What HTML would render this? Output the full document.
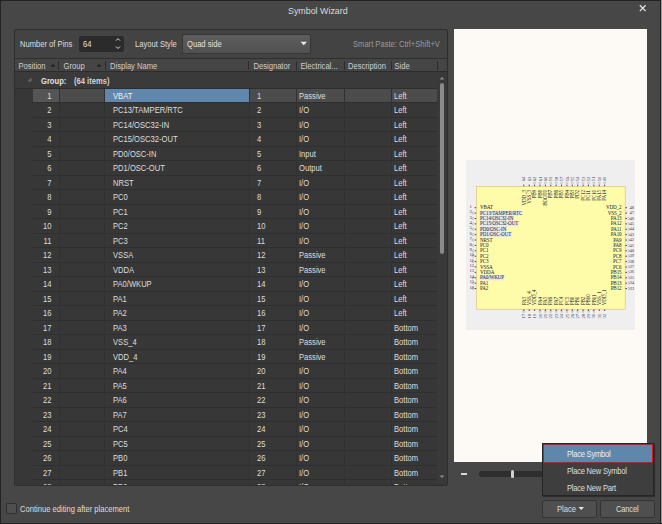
<!DOCTYPE html><html><head><meta charset="utf-8"><style>
*{margin:0;padding:0;box-sizing:border-box}
html,body{width:662px;height:524px;overflow:hidden;background:#474747}
body{position:relative;font-family:"Liberation Sans",sans-serif;font-size:7.6px;color:#dedede}
.a{position:absolute}
.t{position:absolute;white-space:nowrap;line-height:1;transform:translateY(1px) scaleY(1.08);transform-origin:0 60%}
#title{left:288px;top:5.8px;font-size:8.9px;color:#dadada}
#panel{left:14px;top:29px;width:434px;height:457px;background:#434343;border:1px solid #2e2e2e;border-radius:2px}
#spin{left:79px;top:36px;width:45px;height:16px;background:#2b2b2b;border-radius:2px}
#combo{left:182px;top:33.5px;width:129px;height:20px;background:linear-gradient(#5d5d5d,#515151);border:1px solid #363636;border-radius:2px}
#hdr{left:15px;top:58px;width:432px;height:14px;background:#454545;border-top:1px solid #303030;border-bottom:1px solid #2c2c2c}
#hdr i{position:absolute;font-style:normal;top:3px;white-space:nowrap;color:#cdcdcd;line-height:1;transform:translateY(1px) scaleY(1.08);transform-origin:0 60%}
#hdr b{position:absolute;top:2px;width:1px;height:9px;background:#2c2c2c}
#grid{left:15px;top:72px;width:432px;height:413px;background:#373737;overflow:hidden;border-bottom-left-radius:2px;border-bottom-right-radius:2px}
#indent{display:none}
#grouprow{position:absolute;left:0;top:0;width:422px;height:17px;background:#3a3a3a;border-bottom:1px solid #2e2e2e}
#scroll{position:absolute;left:422px;top:0;width:10px;height:412px;background:#393939}
.vl{position:absolute;top:17px;width:1px;height:400px;background:#313131}
.row{position:absolute;left:18px;width:404px;height:14.5px;border-bottom:1px solid #2f2f2f}
.row i{position:absolute;top:3px;font-style:normal;white-space:nowrap;line-height:1;transform:translateY(1px) scaleY(1.08);transform-origin:0 60%}
.c1{left:0;width:18.5px;text-align:right}
.c3{left:80px}
.c4{left:224px}
.c5{left:266px}
.c7{left:361px}
.sel{background:#4c4c4c}
.s1{position:absolute;left:0;top:0;width:26px;height:13.5px;background:#555}
.s3{position:absolute;left:72px;top:0;width:144px;height:13.5px;background:#6087ac}
.sel .c3{color:#f2f2f2}
#preview{left:454px;top:29px;width:193px;height:433px;background:#fdfaf6;overflow:hidden}
.btn{position:absolute;top:500px;height:17.5px;background:#4f4f4f;border:1px solid #343434;border-radius:2px}
#menu{left:542px;top:443px;width:112px;height:53px;background:#3e3e3e;border:1px solid #262626;box-shadow:1px 1px 1px rgba(0,0,0,.35)}
svg text{font-family:"Liberation Serif",serif;font-size:5.1px;letter-spacing:-0.12px;fill:#2a2a3a;stroke:#2a2a3a;stroke-width:0.03px}
svg text.pn{font-size:4.6px;fill:#3a3a4e;stroke:none}
</style></head><body>
<div class="a" style="left:0;top:0;width:662px;height:1px;background:#232323"></div>
<div class="a" style="left:0;top:0;width:1px;height:524px;background:#232323"></div>
<div class="a" style="left:660px;top:0;width:1px;height:524px;background:#232323"></div>
<div class="a" style="left:661px;top:0;width:1px;height:524px;background:#9a9a9a"></div>
<div class="a" style="left:0;top:523px;width:662px;height:1px;background:#232323"></div>
<div class="t" id="title">Symbol Wizard</div>
<svg class="a" style="left:636px;top:2px" width="14" height="14" viewBox="0 0 14 14"><path d="M3.8 3.3L9.6 9.1M9.6 3.3L3.8 9.1" stroke="#e4e4e4" stroke-width="1.25"/></svg>
<div class="a" id="panel"></div>
<div class="t" style="left:20px;top:40px">Number of Pins</div>
<div class="a" id="spin"></div>
<div class="t" style="left:83px;top:40px;color:#e2e2e2">64</div>
<svg class="a" style="left:115px;top:36px" width="6" height="15" viewBox="0 0 6 15"><path d="M1 4.6L3 2.6L5 4.6M1 10.5L3 12.5L5 10.5" stroke="#dddddd" stroke-width="1" fill="none"/></svg>
<div class="t" style="left:135px;top:40px">Layout Style</div>
<div class="a" id="combo"></div>
<div class="t" style="left:187px;top:40px;color:#e2e2e2">Quad side</div>
<svg class="a" style="left:300.2px;top:41.3px" width="8" height="5" viewBox="0 0 8 5"><path d="M0.5 0.8L7 0.8L3.75 4.2Z" fill="#ececec"/></svg>
<div class="t" style="left:353px;top:40px;color:#9a9a9a">Smart Paste: Ctrl+Shift+V</div>
<div class="a" id="hdr">
  <i style="left:3.5px">Position</i><svg class="a" style="left:34.5px;top:4px" width="6" height="4"><path d="M0.5 3.5L3 1L5.5 3.5Z" fill="#1c1c1c"/></svg><b style="left:43px"></b>
  <i style="left:48.5px">Group</i><svg class="a" style="left:81px;top:4px" width="6" height="4"><path d="M0.5 3.5L3 1L5.5 3.5Z" fill="#1c1c1c"/></svg><b style="left:89.5px"></b>
  <i style="left:95px">Display Name</i><b style="left:233px"></b>
  <i style="left:238.5px">Designator</i><b style="left:280.5px"></b>
  <i style="left:285.5px">Electrical...</i><b style="left:328.5px"></b>
  <i style="left:333px">Description</i><b style="left:375.5px"></b>
  <i style="left:379.5px">Side</i><b style="left:421.5px"></b>
</div>
<div class="a" id="grid">
  <div id="indent"></div>
  <div id="grouprow"><svg class="a" style="left:12px;top:5px" width="5" height="5"><path d="M4.5 0.5L4.5 4.5L0.5 4.5Z" fill="#6a6a6a"/></svg>
    <span class="t" style="left:26px;top:4.5px;font-weight:bold;color:#e2e2e2">Group:</span><span class="t" style="left:59px;top:4.5px;font-weight:bold;color:#d2d2d2">(64 items)</span></div>
<div class="row sel" style="top:16.6px"><u class="s1"></u><u class="s3"></u><i class="c1">1</i><i class="c3">VBAT</i><i class="c4">1</i><i class="c5">Passive</i><i class="c7">Left</i></div>
<div class="row" style="top:31.1px"><i class="c1">2</i><i class="c3">PC13/TAMPER/RTC</i><i class="c4">2</i><i class="c5">I/O</i><i class="c7">Left</i></div>
<div class="row" style="top:45.6px"><i class="c1">3</i><i class="c3">PC14/OSC32-IN</i><i class="c4">3</i><i class="c5">I/O</i><i class="c7">Left</i></div>
<div class="row" style="top:60.1px"><i class="c1">4</i><i class="c3">PC15/OSC32-OUT</i><i class="c4">4</i><i class="c5">I/O</i><i class="c7">Left</i></div>
<div class="row" style="top:74.6px"><i class="c1">5</i><i class="c3">PD0/OSC-IN</i><i class="c4">5</i><i class="c5">Input</i><i class="c7">Left</i></div>
<div class="row" style="top:89.1px"><i class="c1">6</i><i class="c3">PD1/OSC-OUT</i><i class="c4">6</i><i class="c5">Output</i><i class="c7">Left</i></div>
<div class="row" style="top:103.6px"><i class="c1">7</i><i class="c3">NRST</i><i class="c4">7</i><i class="c5">I/O</i><i class="c7">Left</i></div>
<div class="row" style="top:118.1px"><i class="c1">8</i><i class="c3">PC0</i><i class="c4">8</i><i class="c5">I/O</i><i class="c7">Left</i></div>
<div class="row" style="top:132.6px"><i class="c1">9</i><i class="c3">PC1</i><i class="c4">9</i><i class="c5">I/O</i><i class="c7">Left</i></div>
<div class="row" style="top:147.1px"><i class="c1">10</i><i class="c3">PC2</i><i class="c4">10</i><i class="c5">I/O</i><i class="c7">Left</i></div>
<div class="row" style="top:161.6px"><i class="c1">11</i><i class="c3">PC3</i><i class="c4">11</i><i class="c5">I/O</i><i class="c7">Left</i></div>
<div class="row" style="top:176.1px"><i class="c1">12</i><i class="c3">VSSA</i><i class="c4">12</i><i class="c5">Passive</i><i class="c7">Left</i></div>
<div class="row" style="top:190.6px"><i class="c1">13</i><i class="c3">VDDA</i><i class="c4">13</i><i class="c5">Passive</i><i class="c7">Left</i></div>
<div class="row" style="top:205.1px"><i class="c1">14</i><i class="c3">PA0/WKUP</i><i class="c4">14</i><i class="c5">I/O</i><i class="c7">Left</i></div>
<div class="row" style="top:219.6px"><i class="c1">15</i><i class="c3">PA1</i><i class="c4">15</i><i class="c5">I/O</i><i class="c7">Left</i></div>
<div class="row" style="top:234.1px"><i class="c1">16</i><i class="c3">PA2</i><i class="c4">16</i><i class="c5">I/O</i><i class="c7">Left</i></div>
<div class="row" style="top:248.6px"><i class="c1">17</i><i class="c3">PA3</i><i class="c4">17</i><i class="c5">I/O</i><i class="c7">Bottom</i></div>
<div class="row" style="top:263.1px"><i class="c1">18</i><i class="c3">VSS_4</i><i class="c4">18</i><i class="c5">Passive</i><i class="c7">Bottom</i></div>
<div class="row" style="top:277.6px"><i class="c1">19</i><i class="c3">VDD_4</i><i class="c4">19</i><i class="c5">Passive</i><i class="c7">Bottom</i></div>
<div class="row" style="top:292.1px"><i class="c1">20</i><i class="c3">PA4</i><i class="c4">20</i><i class="c5">I/O</i><i class="c7">Bottom</i></div>
<div class="row" style="top:306.6px"><i class="c1">21</i><i class="c3">PA5</i><i class="c4">21</i><i class="c5">I/O</i><i class="c7">Bottom</i></div>
<div class="row" style="top:321.1px"><i class="c1">22</i><i class="c3">PA6</i><i class="c4">22</i><i class="c5">I/O</i><i class="c7">Bottom</i></div>
<div class="row" style="top:335.6px"><i class="c1">23</i><i class="c3">PA7</i><i class="c4">23</i><i class="c5">I/O</i><i class="c7">Bottom</i></div>
<div class="row" style="top:350.1px"><i class="c1">24</i><i class="c3">PC4</i><i class="c4">24</i><i class="c5">I/O</i><i class="c7">Bottom</i></div>
<div class="row" style="top:364.6px"><i class="c1">25</i><i class="c3">PC5</i><i class="c4">25</i><i class="c5">I/O</i><i class="c7">Bottom</i></div>
<div class="row" style="top:379.1px"><i class="c1">26</i><i class="c3">PB0</i><i class="c4">26</i><i class="c5">I/O</i><i class="c7">Bottom</i></div>
<div class="row" style="top:393.6px"><i class="c1">27</i><i class="c3">PB1</i><i class="c4">27</i><i class="c5">I/O</i><i class="c7">Bottom</i></div>
<div class="row" style="top:408.1px"><i class="c1">28</i><i class="c3">PB2</i><i class="c4">28</i><i class="c5">I/O</i><i class="c7">Bottom</i></div>
  <b class="vl" style="left:44px"></b><b class="vl" style="left:89px"></b><b class="vl" style="left:234px"></b><b class="vl" style="left:281px"></b><b class="vl" style="left:329px"></b><b class="vl" style="left:376px"></b><b class="vl" style="left:422px"></b>
  <div id="scroll">
    <svg class="a" style="left:2px;top:4px" width="6" height="4"><path d="M0.5 3.5L3 1L5.5 3.5Z" fill="#8a8a8a"/></svg>
    <div class="a" style="left:3px;top:11px;width:4px;height:171px;background:#8a8a8a;border-radius:2px"></div>
    <svg class="a" style="left:2px;top:403px" width="6" height="4"><path d="M0.5 0.5L3 3L5.5 0.5Z" fill="#8a8a8a"/></svg>
  </div>
</div>
<div class="a" id="preview"><svg class="a" style="left:-454px;top:-29px" width="662" height="524"><rect x="466" y="160" width="169" height="170" fill="#efeff0"/>
<rect x="476.4" y="186.4" width="148.8" height="122.8" fill="#fffca9" stroke="#e6c080" stroke-width="0.7"/>
<text x="480" y="209.30">VBAT</text>
<path d="M474.6 207.70H476.2" stroke="#222" stroke-width="0.8"/>
<text class="pn" x="469.5" y="207.80">1</text>
<rect x="479.3" y="210.79" width="43.1" height="4.9" fill="#e4e6ee"/>
<text x="480" y="214.69">PC13/TAMPER/RTC</text>
<path d="M474.6 213.09H476.2" stroke="#222" stroke-width="0.8"/>
<path d="M474 211.69L471.6 213.09L474 214.49" stroke="#8a8a9a" stroke-width="0.5" fill="none"/>
<text class="pn" x="469.5" y="213.19">2</text>
<rect x="479.3" y="216.18" width="34.4" height="4.9" fill="#e4e6ee"/>
<text x="480" y="220.08">PC14/OSC32-IN</text>
<path d="M474.6 218.48H476.2" stroke="#222" stroke-width="0.8"/>
<path d="M474 217.08L471.6 218.48L474 219.88" stroke="#8a8a9a" stroke-width="0.5" fill="none"/>
<text class="pn" x="469.5" y="218.58">3</text>
<rect x="479.3" y="221.57" width="39.2" height="4.9" fill="#e4e6ee"/>
<text x="480" y="225.47">PC15/OSC32-OUT</text>
<path d="M474.6 223.87H476.2" stroke="#222" stroke-width="0.8"/>
<path d="M474 222.47L471.6 223.87L474 225.27" stroke="#8a8a9a" stroke-width="0.5" fill="none"/>
<text class="pn" x="469.5" y="223.97">4</text>
<rect x="479.3" y="226.96" width="27.3" height="4.9" fill="#e4e6ee"/>
<text x="480" y="230.86">PD0/OSC-IN</text>
<path d="M474.6 229.26H476.2" stroke="#222" stroke-width="0.8"/>
<path d="M474 227.86L471.6 229.26L474 230.66" stroke="#8a8a9a" stroke-width="0.5" fill="none"/>
<text class="pn" x="469.5" y="229.36">5</text>
<rect x="479.3" y="232.35" width="32.2" height="4.9" fill="#e4e6ee"/>
<text x="480" y="236.25">PD1/OSC-OUT</text>
<path d="M474.6 234.65H476.2" stroke="#222" stroke-width="0.8"/>
<path d="M474 233.25L471.6 234.65L474 236.05" stroke="#8a8a9a" stroke-width="0.5" fill="none"/>
<text class="pn" x="469.5" y="234.75">6</text>
<text x="480" y="241.64">NRST</text>
<path d="M474.6 240.04H476.2" stroke="#222" stroke-width="0.8"/>
<path d="M474 238.64L471.6 240.04L474 241.44" stroke="#8a8a9a" stroke-width="0.5" fill="none"/>
<text class="pn" x="469.5" y="240.14">7</text>
<text x="480" y="247.03">PC0</text>
<path d="M474.6 245.43H476.2" stroke="#222" stroke-width="0.8"/>
<path d="M474 244.03L471.6 245.43L474 246.83" stroke="#8a8a9a" stroke-width="0.5" fill="none"/>
<text class="pn" x="469.5" y="245.53">8</text>
<text x="480" y="252.42">PC1</text>
<path d="M474.6 250.82H476.2" stroke="#222" stroke-width="0.8"/>
<path d="M474 249.42L471.6 250.82L474 252.22" stroke="#8a8a9a" stroke-width="0.5" fill="none"/>
<text class="pn" x="469.5" y="250.92">9</text>
<text x="480" y="257.81">PC2</text>
<path d="M474.6 256.21H476.2" stroke="#222" stroke-width="0.8"/>
<path d="M474 254.81L471.6 256.21L474 257.61" stroke="#8a8a9a" stroke-width="0.5" fill="none"/>
<text class="pn" x="469.5" y="256.31">10</text>
<text x="480" y="263.20">PC3</text>
<path d="M474.6 261.60H476.2" stroke="#222" stroke-width="0.8"/>
<path d="M474 260.20L471.6 261.60L474 263.00" stroke="#8a8a9a" stroke-width="0.5" fill="none"/>
<text class="pn" x="469.5" y="261.70">11</text>
<text x="480" y="268.59">VSSA</text>
<path d="M474.6 266.99H476.2" stroke="#222" stroke-width="0.8"/>
<text class="pn" x="469.5" y="267.09">12</text>
<text x="480" y="273.98">VDDA</text>
<path d="M474.6 272.38H476.2" stroke="#222" stroke-width="0.8"/>
<text class="pn" x="469.5" y="272.48">13</text>
<rect x="479.3" y="275.47" width="25.0" height="4.9" fill="#e4e6ee"/>
<text x="480" y="279.37">PA0/WKUP</text>
<path d="M474.6 277.77H476.2" stroke="#222" stroke-width="0.8"/>
<path d="M474 276.37L471.6 277.77L474 279.17" stroke="#8a8a9a" stroke-width="0.5" fill="none"/>
<text class="pn" x="469.5" y="277.87">14</text>
<text x="480" y="284.76">PA1</text>
<path d="M474.6 283.16H476.2" stroke="#222" stroke-width="0.8"/>
<path d="M474 281.76L471.6 283.16L474 284.56" stroke="#8a8a9a" stroke-width="0.5" fill="none"/>
<text class="pn" x="469.5" y="283.26">15</text>
<text x="480" y="290.15">PA2</text>
<path d="M474.6 288.55H476.2" stroke="#222" stroke-width="0.8"/>
<path d="M474 287.15L471.6 288.55L474 289.95" stroke="#8a8a9a" stroke-width="0.5" fill="none"/>
<text class="pn" x="469.5" y="288.65">16</text>
<text x="621.5" y="209.30" text-anchor="end">VDD_2</text>
<path d="M625.4 207.70H627" stroke="#222" stroke-width="0.8"/>
<text class="pn" x="629.5" y="208.80">48</text>
<text x="621.5" y="214.69" text-anchor="end">VSS_2</text>
<path d="M625.4 213.09H627" stroke="#222" stroke-width="0.8"/>
<text class="pn" x="629.5" y="214.19">47</text>
<text x="621.5" y="220.08" text-anchor="end">PA13</text>
<path d="M625.4 218.48H627" stroke="#222" stroke-width="0.8"/>
<path d="M627.6 217.08L630 218.48L627.6 219.88" stroke="#8a8a9a" stroke-width="0.5" fill="none"/>
<text class="pn" x="629.5" y="219.58">46</text>
<text x="621.5" y="225.47" text-anchor="end">PA12</text>
<path d="M625.4 223.87H627" stroke="#222" stroke-width="0.8"/>
<path d="M627.6 222.47L630 223.87L627.6 225.27" stroke="#8a8a9a" stroke-width="0.5" fill="none"/>
<text class="pn" x="629.5" y="224.97">45</text>
<text x="621.5" y="230.86" text-anchor="end">PA11</text>
<path d="M625.4 229.26H627" stroke="#222" stroke-width="0.8"/>
<path d="M627.6 227.86L630 229.26L627.6 230.66" stroke="#8a8a9a" stroke-width="0.5" fill="none"/>
<text class="pn" x="629.5" y="230.36">44</text>
<text x="621.5" y="236.25" text-anchor="end">PA10</text>
<path d="M625.4 234.65H627" stroke="#222" stroke-width="0.8"/>
<path d="M627.6 233.25L630 234.65L627.6 236.05" stroke="#8a8a9a" stroke-width="0.5" fill="none"/>
<text class="pn" x="629.5" y="235.75">43</text>
<text x="621.5" y="241.64" text-anchor="end">PA9</text>
<path d="M625.4 240.04H627" stroke="#222" stroke-width="0.8"/>
<path d="M627.6 238.64L630 240.04L627.6 241.44" stroke="#8a8a9a" stroke-width="0.5" fill="none"/>
<text class="pn" x="629.5" y="241.14">42</text>
<text x="621.5" y="247.03" text-anchor="end">PA8</text>
<path d="M625.4 245.43H627" stroke="#222" stroke-width="0.8"/>
<path d="M627.6 244.03L630 245.43L627.6 246.83" stroke="#8a8a9a" stroke-width="0.5" fill="none"/>
<text class="pn" x="629.5" y="246.53">41</text>
<text x="621.5" y="252.42" text-anchor="end">PC9</text>
<path d="M625.4 250.82H627" stroke="#222" stroke-width="0.8"/>
<path d="M627.6 249.42L630 250.82L627.6 252.22" stroke="#8a8a9a" stroke-width="0.5" fill="none"/>
<text class="pn" x="629.5" y="251.92">40</text>
<text x="621.5" y="257.81" text-anchor="end">PC8</text>
<path d="M625.4 256.21H627" stroke="#222" stroke-width="0.8"/>
<path d="M627.6 254.81L630 256.21L627.6 257.61" stroke="#8a8a9a" stroke-width="0.5" fill="none"/>
<text class="pn" x="629.5" y="257.31">39</text>
<text x="621.5" y="263.20" text-anchor="end">PC7</text>
<path d="M625.4 261.60H627" stroke="#222" stroke-width="0.8"/>
<path d="M627.6 260.20L630 261.60L627.6 263.00" stroke="#8a8a9a" stroke-width="0.5" fill="none"/>
<text class="pn" x="629.5" y="262.70">38</text>
<text x="621.5" y="268.59" text-anchor="end">PC6</text>
<path d="M625.4 266.99H627" stroke="#222" stroke-width="0.8"/>
<path d="M627.6 265.59L630 266.99L627.6 268.39" stroke="#8a8a9a" stroke-width="0.5" fill="none"/>
<text class="pn" x="629.5" y="268.09">37</text>
<text x="621.5" y="273.98" text-anchor="end">PB15</text>
<path d="M625.4 272.38H627" stroke="#222" stroke-width="0.8"/>
<path d="M627.6 270.98L630 272.38L627.6 273.78" stroke="#8a8a9a" stroke-width="0.5" fill="none"/>
<text class="pn" x="629.5" y="273.48">36</text>
<text x="621.5" y="279.37" text-anchor="end">PB14</text>
<path d="M625.4 277.77H627" stroke="#222" stroke-width="0.8"/>
<path d="M627.6 276.37L630 277.77L627.6 279.17" stroke="#8a8a9a" stroke-width="0.5" fill="none"/>
<text class="pn" x="629.5" y="278.87">35</text>
<text x="621.5" y="284.76" text-anchor="end">PB13</text>
<path d="M625.4 283.16H627" stroke="#222" stroke-width="0.8"/>
<path d="M627.6 281.76L630 283.16L627.6 284.56" stroke="#8a8a9a" stroke-width="0.5" fill="none"/>
<text class="pn" x="629.5" y="284.26">34</text>
<text x="621.5" y="290.15" text-anchor="end">PB12</text>
<path d="M625.4 288.55H627" stroke="#222" stroke-width="0.8"/>
<path d="M627.6 287.15L630 288.55L627.6 289.95" stroke="#8a8a9a" stroke-width="0.5" fill="none"/>
<text class="pn" x="629.5" y="289.65">33</text>
<text transform="translate(525.50 305.2) rotate(-90)">PA3</text>
<path d="M523.80 309.4V311" stroke="#222" stroke-width="0.8"/>
<path d="M522.50 310.6L523.80 311.8L525.10 310.6M522.50 311.6L523.80 312.8L525.10 311.6" stroke="#9a9aa8" stroke-width="0.45" fill="none"/>
<text class="pn" transform="translate(525.40 318.5) rotate(-90)">17</text>
<text transform="translate(530.89 305.2) rotate(-90)">VSS_4</text>
<path d="M529.19 309.4V311" stroke="#222" stroke-width="0.8"/>
<text class="pn" transform="translate(530.79 318.5) rotate(-90)">18</text>
<text transform="translate(536.28 305.2) rotate(-90)">VDD_4</text>
<path d="M534.58 309.4V311" stroke="#222" stroke-width="0.8"/>
<text class="pn" transform="translate(536.18 318.5) rotate(-90)">19</text>
<text transform="translate(541.67 305.2) rotate(-90)">PA4</text>
<path d="M539.97 309.4V311" stroke="#222" stroke-width="0.8"/>
<path d="M538.67 310.6L539.97 311.8L541.27 310.6M538.67 311.6L539.97 312.8L541.27 311.6" stroke="#9a9aa8" stroke-width="0.45" fill="none"/>
<text class="pn" transform="translate(541.57 318.5) rotate(-90)">20</text>
<text transform="translate(547.06 305.2) rotate(-90)">PA5</text>
<path d="M545.36 309.4V311" stroke="#222" stroke-width="0.8"/>
<path d="M544.06 310.6L545.36 311.8L546.66 310.6M544.06 311.6L545.36 312.8L546.66 311.6" stroke="#9a9aa8" stroke-width="0.45" fill="none"/>
<text class="pn" transform="translate(546.96 318.5) rotate(-90)">21</text>
<text transform="translate(552.45 305.2) rotate(-90)">PA6</text>
<path d="M550.75 309.4V311" stroke="#222" stroke-width="0.8"/>
<path d="M549.45 310.6L550.75 311.8L552.05 310.6M549.45 311.6L550.75 312.8L552.05 311.6" stroke="#9a9aa8" stroke-width="0.45" fill="none"/>
<text class="pn" transform="translate(552.35 318.5) rotate(-90)">22</text>
<text transform="translate(557.84 305.2) rotate(-90)">PA7</text>
<path d="M556.14 309.4V311" stroke="#222" stroke-width="0.8"/>
<path d="M554.84 310.6L556.14 311.8L557.44 310.6M554.84 311.6L556.14 312.8L557.44 311.6" stroke="#9a9aa8" stroke-width="0.45" fill="none"/>
<text class="pn" transform="translate(557.74 318.5) rotate(-90)">23</text>
<text transform="translate(563.23 305.2) rotate(-90)">PC4</text>
<path d="M561.53 309.4V311" stroke="#222" stroke-width="0.8"/>
<path d="M560.23 310.6L561.53 311.8L562.83 310.6M560.23 311.6L561.53 312.8L562.83 311.6" stroke="#9a9aa8" stroke-width="0.45" fill="none"/>
<text class="pn" transform="translate(563.13 318.5) rotate(-90)">24</text>
<text transform="translate(568.62 305.2) rotate(-90)">PC5</text>
<path d="M566.92 309.4V311" stroke="#222" stroke-width="0.8"/>
<path d="M565.62 310.6L566.92 311.8L568.22 310.6M565.62 311.6L566.92 312.8L568.22 311.6" stroke="#9a9aa8" stroke-width="0.45" fill="none"/>
<text class="pn" transform="translate(568.52 318.5) rotate(-90)">25</text>
<text transform="translate(574.01 305.2) rotate(-90)">PB0</text>
<path d="M572.31 309.4V311" stroke="#222" stroke-width="0.8"/>
<path d="M571.01 310.6L572.31 311.8L573.61 310.6M571.01 311.6L572.31 312.8L573.61 311.6" stroke="#9a9aa8" stroke-width="0.45" fill="none"/>
<text class="pn" transform="translate(573.91 318.5) rotate(-90)">26</text>
<text transform="translate(579.40 305.2) rotate(-90)">PB1</text>
<path d="M577.70 309.4V311" stroke="#222" stroke-width="0.8"/>
<path d="M576.40 310.6L577.70 311.8L579.00 310.6M576.40 311.6L577.70 312.8L579.00 311.6" stroke="#9a9aa8" stroke-width="0.45" fill="none"/>
<text class="pn" transform="translate(579.30 318.5) rotate(-90)">27</text>
<text transform="translate(584.79 305.2) rotate(-90)">PB2</text>
<path d="M583.09 309.4V311" stroke="#222" stroke-width="0.8"/>
<path d="M581.79 310.6L583.09 311.8L584.39 310.6M581.79 311.6L583.09 312.8L584.39 311.6" stroke="#9a9aa8" stroke-width="0.45" fill="none"/>
<text class="pn" transform="translate(584.69 318.5) rotate(-90)">28</text>
<text transform="translate(590.18 305.2) rotate(-90)">PB10</text>
<path d="M588.48 309.4V311" stroke="#222" stroke-width="0.8"/>
<path d="M587.18 310.6L588.48 311.8L589.78 310.6M587.18 311.6L588.48 312.8L589.78 311.6" stroke="#9a9aa8" stroke-width="0.45" fill="none"/>
<text class="pn" transform="translate(590.08 318.5) rotate(-90)">29</text>
<text transform="translate(595.57 305.2) rotate(-90)">PB11</text>
<path d="M593.87 309.4V311" stroke="#222" stroke-width="0.8"/>
<path d="M592.57 310.6L593.87 311.8L595.17 310.6M592.57 311.6L593.87 312.8L595.17 311.6" stroke="#9a9aa8" stroke-width="0.45" fill="none"/>
<text class="pn" transform="translate(595.47 318.5) rotate(-90)">30</text>
<text transform="translate(600.96 305.2) rotate(-90)">VSS_1</text>
<path d="M599.26 309.4V311" stroke="#222" stroke-width="0.8"/>
<text class="pn" transform="translate(600.86 318.5) rotate(-90)">31</text>
<text transform="translate(606.35 305.2) rotate(-90)">VDD_1</text>
<path d="M604.65 309.4V311" stroke="#222" stroke-width="0.8"/>
<text class="pn" transform="translate(606.25 318.5) rotate(-90)">32</text>
<text transform="translate(525.50 190) rotate(-90)" text-anchor="end">VDD_3</text>
<path d="M523.80 184.6V186.2" stroke="#222" stroke-width="0.8"/>
<text class="pn" transform="translate(525.40 181.2) rotate(-90)">64</text>
<text transform="translate(530.89 190) rotate(-90)" text-anchor="end">VSS_3</text>
<path d="M529.19 184.6V186.2" stroke="#222" stroke-width="0.8"/>
<text class="pn" transform="translate(530.79 181.2) rotate(-90)">63</text>
<text transform="translate(536.28 190) rotate(-90)" text-anchor="end">PB9</text>
<path d="M534.58 184.6V186.2" stroke="#222" stroke-width="0.8"/>
<path d="M533.28 184.2L534.58 182.8L535.88 184.2M533.28 183L534.58 181.6L535.88 183" stroke="#9a9aa8" stroke-width="0.45" fill="none"/>
<text class="pn" transform="translate(536.18 181.2) rotate(-90)">62</text>
<text transform="translate(541.67 190) rotate(-90)" text-anchor="end">PB8</text>
<path d="M539.97 184.6V186.2" stroke="#222" stroke-width="0.8"/>
<path d="M538.67 184.2L539.97 182.8L541.27 184.2M538.67 183L539.97 181.6L541.27 183" stroke="#9a9aa8" stroke-width="0.45" fill="none"/>
<text class="pn" transform="translate(541.57 181.2) rotate(-90)">61</text>
<text transform="translate(547.06 190) rotate(-90)" text-anchor="end">BOOT0</text>
<path d="M545.36 184.6V186.2" stroke="#222" stroke-width="0.8"/>
<path d="M544.06 184.2L545.36 182.8L546.66 184.2M544.06 183L545.36 181.6L546.66 183" stroke="#9a9aa8" stroke-width="0.45" fill="none"/>
<text class="pn" transform="translate(546.96 181.2) rotate(-90)">60</text>
<text transform="translate(552.45 190) rotate(-90)" text-anchor="end">PB7</text>
<path d="M550.75 184.6V186.2" stroke="#222" stroke-width="0.8"/>
<path d="M549.45 184.2L550.75 182.8L552.05 184.2M549.45 183L550.75 181.6L552.05 183" stroke="#9a9aa8" stroke-width="0.45" fill="none"/>
<text class="pn" transform="translate(552.35 181.2) rotate(-90)">59</text>
<text transform="translate(557.84 190) rotate(-90)" text-anchor="end">PB6</text>
<path d="M556.14 184.6V186.2" stroke="#222" stroke-width="0.8"/>
<path d="M554.84 184.2L556.14 182.8L557.44 184.2M554.84 183L556.14 181.6L557.44 183" stroke="#9a9aa8" stroke-width="0.45" fill="none"/>
<text class="pn" transform="translate(557.74 181.2) rotate(-90)">58</text>
<text transform="translate(563.23 190) rotate(-90)" text-anchor="end">PB5</text>
<path d="M561.53 184.6V186.2" stroke="#222" stroke-width="0.8"/>
<path d="M560.23 184.2L561.53 182.8L562.83 184.2M560.23 183L561.53 181.6L562.83 183" stroke="#9a9aa8" stroke-width="0.45" fill="none"/>
<text class="pn" transform="translate(563.13 181.2) rotate(-90)">57</text>
<text transform="translate(568.62 190) rotate(-90)" text-anchor="end">PB4</text>
<path d="M566.92 184.6V186.2" stroke="#222" stroke-width="0.8"/>
<path d="M565.62 184.2L566.92 182.8L568.22 184.2M565.62 183L566.92 181.6L568.22 183" stroke="#9a9aa8" stroke-width="0.45" fill="none"/>
<text class="pn" transform="translate(568.52 181.2) rotate(-90)">56</text>
<text transform="translate(574.01 190) rotate(-90)" text-anchor="end">PB3</text>
<path d="M572.31 184.6V186.2" stroke="#222" stroke-width="0.8"/>
<path d="M571.01 184.2L572.31 182.8L573.61 184.2M571.01 183L572.31 181.6L573.61 183" stroke="#9a9aa8" stroke-width="0.45" fill="none"/>
<text class="pn" transform="translate(573.91 181.2) rotate(-90)">55</text>
<text transform="translate(579.40 190) rotate(-90)" text-anchor="end">PD2</text>
<path d="M577.70 184.6V186.2" stroke="#222" stroke-width="0.8"/>
<path d="M576.40 184.2L577.70 182.8L579.00 184.2M576.40 183L577.70 181.6L579.00 183" stroke="#9a9aa8" stroke-width="0.45" fill="none"/>
<text class="pn" transform="translate(579.30 181.2) rotate(-90)">54</text>
<text transform="translate(584.79 190) rotate(-90)" text-anchor="end">PC12</text>
<path d="M583.09 184.6V186.2" stroke="#222" stroke-width="0.8"/>
<path d="M581.79 184.2L583.09 182.8L584.39 184.2M581.79 183L583.09 181.6L584.39 183" stroke="#9a9aa8" stroke-width="0.45" fill="none"/>
<text class="pn" transform="translate(584.69 181.2) rotate(-90)">53</text>
<text transform="translate(590.18 190) rotate(-90)" text-anchor="end">PC11</text>
<path d="M588.48 184.6V186.2" stroke="#222" stroke-width="0.8"/>
<path d="M587.18 184.2L588.48 182.8L589.78 184.2M587.18 183L588.48 181.6L589.78 183" stroke="#9a9aa8" stroke-width="0.45" fill="none"/>
<text class="pn" transform="translate(590.08 181.2) rotate(-90)">52</text>
<text transform="translate(595.57 190) rotate(-90)" text-anchor="end">PC10</text>
<path d="M593.87 184.6V186.2" stroke="#222" stroke-width="0.8"/>
<path d="M592.57 184.2L593.87 182.8L595.17 184.2M592.57 183L593.87 181.6L595.17 183" stroke="#9a9aa8" stroke-width="0.45" fill="none"/>
<text class="pn" transform="translate(595.47 181.2) rotate(-90)">51</text>
<text transform="translate(600.96 190) rotate(-90)" text-anchor="end">PA15</text>
<path d="M599.26 184.6V186.2" stroke="#222" stroke-width="0.8"/>
<path d="M597.96 184.2L599.26 182.8L600.56 184.2M597.96 183L599.26 181.6L600.56 183" stroke="#9a9aa8" stroke-width="0.45" fill="none"/>
<text class="pn" transform="translate(600.86 181.2) rotate(-90)">50</text>
<text transform="translate(606.35 190) rotate(-90)" text-anchor="end">PA14</text>
<path d="M604.65 184.6V186.2" stroke="#222" stroke-width="0.8"/>
<path d="M603.35 184.2L604.65 182.8L605.95 184.2M603.35 183L604.65 181.6L605.95 183" stroke="#9a9aa8" stroke-width="0.45" fill="none"/>
<text class="pn" transform="translate(606.25 181.2) rotate(-90)">49</text></svg></div>
<div class="a" style="left:461px;top:473px;width:6px;height:1.6px;background:#d8d8d8"></div>
<div class="a" style="left:479px;top:471px;width:80px;height:6px;background:#2e2e2e;border-radius:3px"></div>
<div class="a" style="left:510.5px;top:470px;width:3.5px;height:8px;background:#d0d0d0;border-radius:1.5px"></div>
<div class="a" id="menu"></div>
<div class="a" style="left:543px;top:444px;width:110px;height:19px;background:#5f86ab;border:1.7px solid #d0161e"></div>
<div class="t" style="left:567px;top:450.2px;color:#eeeeee;letter-spacing:-0.25px">Place Symbol</div>
<div class="t" style="left:567px;top:466.5px;letter-spacing:-0.25px">Place New Symbol</div>
<div class="t" style="left:567px;top:483.5px;letter-spacing:-0.25px">Place New Part</div>
<div class="btn" style="left:542px;width:55px"></div>
<div class="t" style="left:557px;top:505px">Place</div>
<svg class="a" style="left:578px;top:506px" width="7" height="5" viewBox="0 0 7 5"><path d="M0.5 1L6 1L3.25 4Z" fill="#e6e6e6"/></svg>
<div class="btn" style="left:600px;width:55px"></div>
<div class="t" style="left:616px;top:505px;letter-spacing:-0.2px">Cancel</div>
<div class="a" style="left:6px;top:503px;width:11px;height:11px;background:#4f4f4f;border:1px solid #303030;border-radius:2px"></div>
<div class="t" style="left:20px;top:505px">Continue editing after placement</div>
</body></html>
